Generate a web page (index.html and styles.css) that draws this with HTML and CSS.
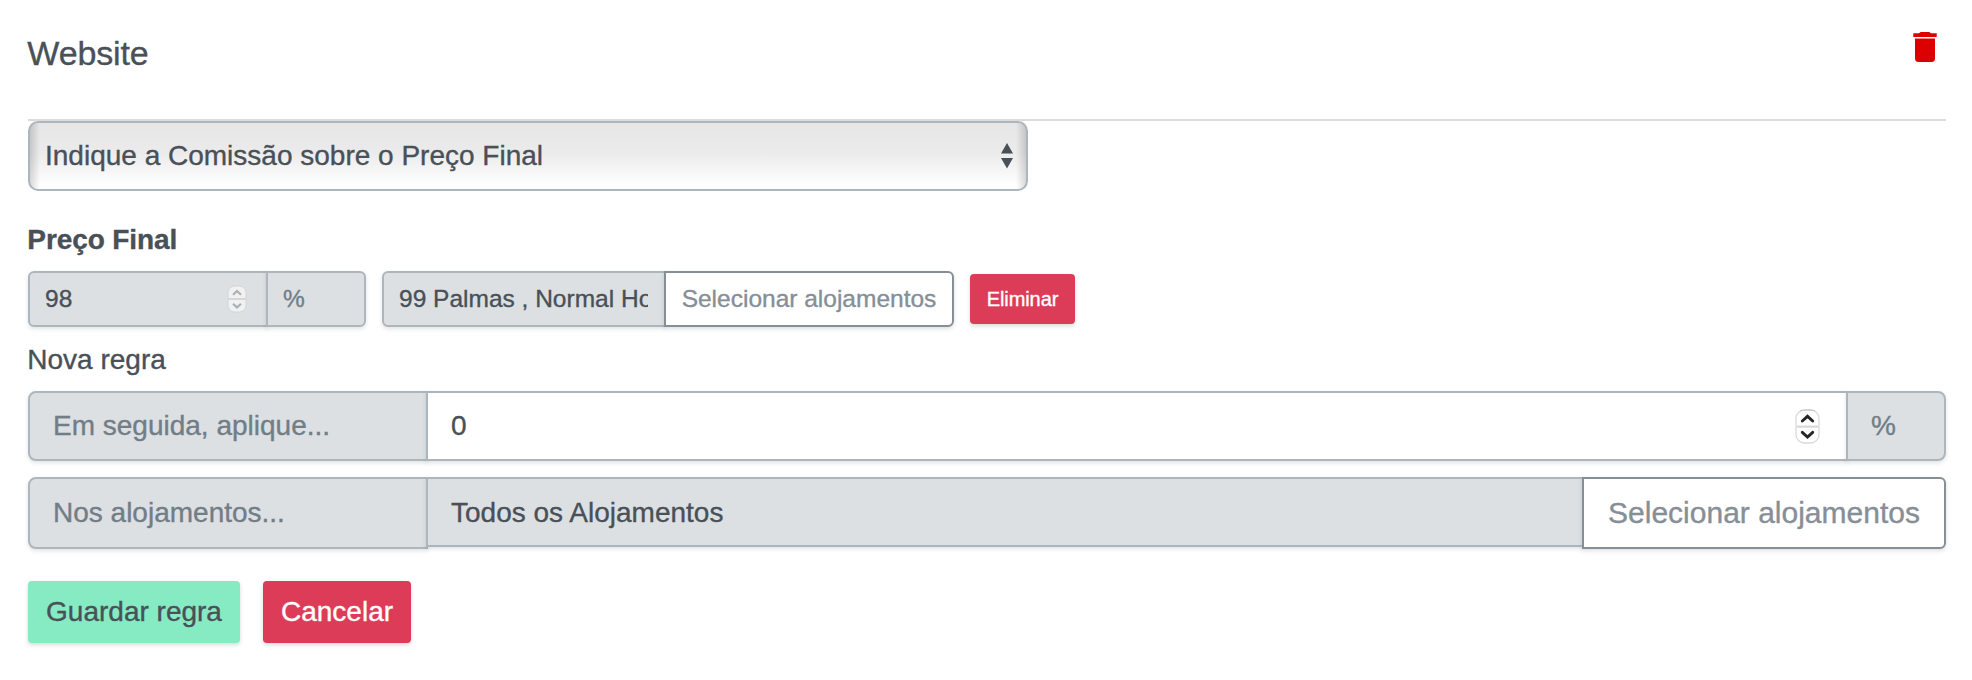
FILE: index.html
```html
<!DOCTYPE html>
<html lang="pt">
<head>
<meta charset="utf-8">
<title>Website</title>
<link rel="stylesheet" href="styles.css">
</head>
<body>
<main class="panel">
  <header class="head">
    <h1 class="title"><span>Website</span></h1>
    <svg class="trash" viewBox="0 0 24 30" aria-label="Eliminar"><path fill="#d00" d="M0.3 1.3H6L7.7 0H16.3L18 1.3H23.7V5H0.3ZM2 6.5H22V26.6Q22 30 18.6 30H5.4Q2 30 2 26.6Z"/></svg>
  </header>
  <div class="select">
    <span class="select-text">Indique a Comissão sobre o Preço Final</span>
    <svg class="arrows" viewBox="0 0 12 26"><path fill="#495057" d="M6 0L12 10.5H0ZM0 15H12L6 25.5Z"/></svg>
  </div>
  <h2 class="subtitle"><span>Preço Final</span></h2>
  <div class="rule">
    <div class="group">
      <div class="cell muted first amount"><span>98</span>
        <svg class="spin-sm" viewBox="0 0 20 28"><rect x="1" y="1" width="18" height="26" rx="6.5" fill="#f0f1f1" stroke="#d3d5d6"/><path d="M1 14H19" stroke="#d5d6d7" stroke-width="2"/><path d="M6 9.7L10 6L14 9.7M6 18.7L10 22.4L14 18.7" fill="none" stroke="#adb0b2" stroke-width="2.2"/></svg>
      </div>
      <div class="cell muted last unit"><span>%</span></div>
    </div>
    <div class="group">
      <div class="cell muted first places"><span class="clip">99 Palmas , Normal Hotel</span></div>
      <button class="outline outline-sm"><span>Selecionar alojamentos</span></button>
    </div>
    <button class="btn red remove"><span>Eliminar</span></button>
  </div>
  <h3 class="label"><span>Nova regra</span></h3>
  <div class="group large">
    <div class="cell muted first lead"><span>Em seguida, aplique...</span></div>
    <div class="cell grow number"><span>0</span>
      <svg class="spin" viewBox="0 0 25 35"><rect x="1" y="1" width="23" height="33" rx="8.5" fill="#fff" stroke="#dadada" stroke-width="1.3"/><path d="M5 1.6Q12.500 0 20 1.600" fill="none" stroke="#c5c5c5"/><path d="M1.500 17.600H23.500" stroke="#d6d6d6" stroke-width="2"/><path d="M7.300 12L12.500 7.300L17.700 12M7.300 23.300L12.500 28L17.700 23.300" fill="none" stroke="#262626" stroke-width="2.900" stroke-linecap="round"/></svg>
    </div>
    <div class="cell muted last percent"><span>%</span></div>
  </div>
  <div class="group large second">
    <div class="cell muted first lead"><span>Nos alojamentos...</span></div>
    <div class="cell muted grow short"><span>Todos os Alojamentos</span></div>
    <button class="outline outline-lg"><span>Selecionar alojamentos</span></button>
  </div>
  <footer class="actions">
    <button class="btn green"><span>Guardar regra</span></button>
    <button class="btn red cancel"><span>Cancelar</span></button>
  </footer>
</main>
</body>
</html>
```
FILE: styles.css
```css
* { box-sizing: border-box; }
body {
  margin: 0;
  background: #fff;
  color: #495057;
  font: 28px/42px "Liberation Sans", Arial, sans-serif;
  -webkit-text-stroke: 0.35px currentColor;
}
h1, h2, h3 { margin: 0; font-weight: 400; }
.panel { width: 1972px; height: 680px; padding: 0 26px 0 28px; }
.head {
  height: 121px;
  border-bottom: 2px solid #dcdcdc;
  display: flex;
  justify-content: space-between;
  align-items: flex-start;
  padding: 32px 9px 0 0;
}
.title { font-size: 34px; line-height: 42px; letter-spacing: -0.15px; }
.trash { width: 24px; height: 30px; }
.select {
  width: 1000px;
  height: 70px;
  border: 2px solid #adb5bd;
  border-radius: 10px;
  display: flex;
  align-items: center;
  justify-content: space-between;
  padding: 0 13px 0 15px;
  background:
    linear-gradient(90deg, rgba(0,0,0,.15), transparent 10px),
    linear-gradient(270deg, rgba(0,0,0,.15), transparent 10px),
    linear-gradient(#e6e6e6, #ebebeb 45%, #fff 95%);
}
.arrows { width: 12px; height: 26px; }
.subtitle { font-size: 28px; font-weight: 700; padding-top: 28px; height: 80px; letter-spacing: -0.1px; }
.subtitle, .label, .title { text-indent: -0.7px; }
.rule { display: flex; align-items: center; gap: 16px; font-size: 24.5px; height: 56px; }
.group { display: flex; height: 56px; }
.cell {
  border: 2px solid #adb5bd;
  display: flex;
  align-items: center;
  justify-content: space-between;
  background: #fff;
  padding: 0 15px;
  box-shadow: 0 2px 4px rgba(40,60,80,.14);
  white-space: nowrap;
}
.cell + .cell { margin-left: -2px; }
.muted { background: #dce0e3; }
.first { border-radius: 6px 0 0 6px; }
.last { border-radius: 0 6px 6px 0; }
.unit, .percent, .lead { color: #727d86; }
.amount { width: 240px; padding-right: 19px; }
.unit { width: 100px; }
.places { width: 284px; padding-right: 16px; }
.clip { width: 100%; overflow: hidden; }
.spin-sm { width: 20px; height: 28px; }
.spin { width: 25px; height: 35px; }
button { font: inherit; padding: 0; white-space: nowrap; -webkit-text-stroke: inherit; }
.outline {
  border: 2px solid #868e96;
  border-radius: 0 6px 6px 0;
  background: #fff;
  color: #868e96;
  -webkit-text-stroke-color: currentColor;
  margin-left: -2px;
  box-shadow: 0 2px 4px rgba(40,60,80,.16);
  position: relative;
}
.outline-sm { width: 290px; }
.outline-lg { width: 364px; font-size: 30px; }
.btn { border: 0; border-radius: 4px; box-shadow: 0 2px 4px rgba(0,0,0,.15); -webkit-text-stroke-color: currentColor; }
.red { background: #dd3c58; color: #fff; }
.green { background: #86eac3; color: #495057; width: 212px; }
.remove { width: 105px; height: 50px; font-size: 20px; letter-spacing: -0.1px; }
.label { font-size: 28px; height: 64px; padding-top: 12px; }
.large { height: 70px; }
.large .cell { padding: 0 23px; }
.large .number { padding-right: 26px; }
.large .first { border-radius: 8px 0 0 8px; }
.large .last { border-radius: 0 8px 8px 0; }
.large .lead { width: 400px; }
.large .percent { width: 100px; }
.large .grow { flex: 1; }
.second { margin-top: 16px; height: 72px; }
.second .short { height: 70px; padding-top: 2px; }
.actions { display: flex; gap: 23px; padding-top: 32px; }
.actions .btn { height: 62px; }
.cancel { width: 148px; }
```
